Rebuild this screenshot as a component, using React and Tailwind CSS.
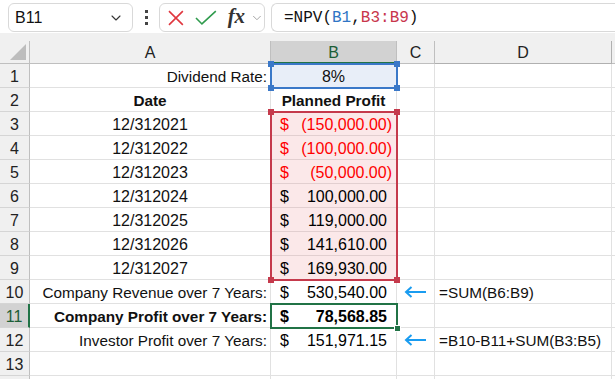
import React from "react";
import { ChevronDown } from "lucide-react";

const rows = [
  { n: 1, a: "Dividend Rate:", aCls: "justify-end pr-[3px] text-[15.3px]", b: { kind: "center", text: "8%" } },
  { n: 2, a: "Date", aCls: "justify-center font-bold text-[15.3px]", b: { kind: "center", text: "Planned Profit", bold: true } },
  { n: 3, a: "12/312021", aCls: "justify-center text-[16px]", b: { kind: "acct", val: "(150,000.00)", neg: true }, pink: true },
  { n: 4, a: "12/312022", aCls: "justify-center text-[16px]", b: { kind: "acct", val: "(100,000.00)", neg: true }, pink: true },
  { n: 5, a: "12/312023", aCls: "justify-center text-[16px]", b: { kind: "acct", val: "(50,000.00)", neg: true }, pink: true },
  { n: 6, a: "12/312024", aCls: "justify-center text-[16px]", b: { kind: "acct", val: "100,000.00" }, pink: true },
  { n: 7, a: "12/312025", aCls: "justify-center text-[16px]", b: { kind: "acct", val: "119,000.00" }, pink: true },
  { n: 8, a: "12/312026", aCls: "justify-center text-[16px]", b: { kind: "acct", val: "141,610.00" }, pink: true },
  { n: 9, a: "12/312027", aCls: "justify-center text-[16px]", b: { kind: "acct", val: "169,930.00" }, pink: true },
  { n: 10, a: "Company Revenue over 7 Years:", aCls: "justify-end pr-[3px] text-[15.3px]", b: { kind: "acct", val: "530,540.00" }, arrow: true, d: "=SUM(B6:B9)" },
  { n: 11, a: "Company Profit over 7 Years:", aCls: "justify-end pr-[3px] text-[15.3px] font-bold", b: { kind: "acct", val: "78,568.85", bold: true }, sel: true },
  { n: 12, a: "Investor Profit over 7 Years:", aCls: "justify-end pr-[3px] text-[15.3px]", b: { kind: "acct", val: "151,971.15" }, arrow: true, d: "=B10-B11+SUM(B3:B5)" },
  { n: 13 },
  { n: 14, hideNum: true },
];

function Arrow() {
  return (
    <svg width="24" height="12" viewBox="0 0 24 12">
      <path d="M2 6 H22" stroke="#1a9cf0" strokeWidth="2" />
      <path d="M7.5 1 L2 6 L7.5 11" stroke="#1a9cf0" strokeWidth="2" fill="none" />
    </svg>
  );
}

function BCell({ b }) {
  if (!b) return null;
  if (b.kind === "center") {
    return (
      <div className={`w-full flex justify-center ${b.bold ? "font-bold text-[15.3px]" : "text-[16px]"}`}>{b.text}</div>
    );
  }
  const color = b.neg ? "text-[#ff0000]" : "text-[#000]";
  return (
    <div className={`w-full flex justify-between pl-[9px] ${b.neg ? "pr-[4px]" : "pr-[9px]"} text-[16px] ${color} ${b.bold ? "font-bold" : ""}`}>
      <span>$</span>
      <span>{b.val}</span>
    </div>
  );
}

function Square({ cls, color }) {
  return <div className={`absolute w-[6px] h-[6px] ${color} ${cls}`} />;
}

export default function App() {
  const gl = "border-[#e1e1e1]";
  return (
    <div className="w-[615px] h-[379px] overflow-hidden bg-white text-[#111] font-['Liberation_Sans',Arial,sans-serif] leading-none">
      {/* Toolbar */}
      <div className="h-[33px] flex items-start pt-[3px] pl-[8px] gap-0 bg-white">
        <div className="w-[125px] h-[29px] rounded-[6px] border border-[#d9d9d9] flex items-center justify-between pl-[6px] pr-[8px] text-[16px]">
          <span>B11</span>
          <ChevronDown size={16} strokeWidth={1.6} className="text-[#333]" />
        </div>
        <div className="w-[26px] h-[29px] flex flex-col items-center justify-center gap-[3px]">
          <div className="w-[3px] h-[3px] bg-[#444]" />
          <div className="w-[3px] h-[3px] bg-[#444]" />
          <div className="w-[3px] h-[3px] bg-[#444]" />
        </div>
        <div className="w-[106px] h-[29px] rounded-[6px] border border-[#d9d9d9] flex items-center pl-[7px]">
          <svg width="18" height="18" viewBox="0 0 18 18">
            <path d="M2 2 L16 16 M16 2 L2 16" stroke="#e0373f" strokeWidth="1.6" fill="none" />
          </svg>
          <svg width="22" height="16" viewBox="0 0 22 16" className="ml-[10px]">
            <path d="M1 8 L7 14 L21 1" stroke="#2f9b4d" strokeWidth="1.6" fill="none" />
          </svg>
          <span className="ml-[11px] font-['Liberation_Serif',serif] italic font-bold text-[21px] text-[#333] leading-none -mt-[2px]">fx</span>
          <ChevronDown size={14} strokeWidth={1.5} className="ml-[5px] text-[#9a9a9a]" />
        </div>
        <div className="ml-[6px] flex-1 h-[29px] rounded-l-[6px] border border-r-0 border-[#d9d9d9] flex items-center pl-[12px] font-['Liberation_Mono',monospace] text-[16px]">
          <span>=NPV(</span>
          <span className="text-[#2f75c5]">B1</span>
          <span>,</span>
          <span className="text-[#c8364c]">B3:B9</span>
          <span>)</span>
        </div>
      </div>
      {/* gray band */}
      <div className="h-[8px] bg-[#f0f0f0]" />
      {/* column headers */}
      <div className="flex h-[23px] bg-[#f0f0f0] text-[16px] text-[#222]">
        <div className="w-[30px] shrink-0 border-r border-b border-[#bfbfbf] relative">
          <svg width="16" height="16" viewBox="0 0 16 16" className="absolute right-[3px] bottom-[3px]">
            <path d="M16 0 L16 16 L0 16 Z" fill="#bdbdbd" />
          </svg>
        </div>
        <div className="w-[241px] shrink-0 border-r border-b border-[#bfbfbf] flex items-center justify-center pt-[2px]">A</div>
        <div className="w-[126px] shrink-0 border-r border-[#bfbfbf] border-b-2 border-b-[#217346] bg-[#d2d2d2] text-[#1c5e36] flex items-center justify-center pt-[2px]">B</div>
        <div className="w-[38px] shrink-0 border-r border-b border-[#bfbfbf] flex items-center justify-center pt-[2px]">C</div>
        <div className="w-[177px] shrink-0 border-r border-b border-[#b0b0b0] flex items-center justify-center pt-[2px]">D</div>
        <div className="flex-1 border-b border-[#bfbfbf]" />
      </div>
      {/* body */}
      <div className="relative">
        {rows.map((r) => (
          <div key={r.n} className="flex h-[24px]">
            <div
              className={`w-[30px] shrink-0 border-b border-[#d5d5d5] flex items-center justify-center pt-[2px] text-[16px] ${
                r.sel ? "bg-[#d2d2d2] border-r-2 border-r-[#217346] text-[#1c5e36]" : "bg-[#f0f0f0] border-r border-r-[#bfbfbf] text-[#222]"
              }`}
            >
              {r.hideNum ? "" : r.n}
            </div>
            <div className={`w-[241px] shrink-0 border-r border-b ${gl} flex items-center pt-[2px] ${r.aCls || ""}`}>{r.a}</div>
            <div
              className={`w-[126px] shrink-0 border-r border-b flex items-center pt-[2px] ${
                r.pink ? "bg-[#fbe8e9] border-[#e2cfd0]" : r.n === 1 ? "bg-[#e8eef8] border-[#e1e1e1]" : gl
              }`}
            >
              <BCell b={r.b} />
            </div>
            <div className={`w-[38px] shrink-0 border-r border-b ${gl} flex items-center justify-center`}>
              {r.arrow ? <Arrow /> : null}
            </div>
            <div className={`w-[177px] shrink-0 border-r border-b ${gl} flex items-center pt-[2px] pl-[4px] text-[15.3px]`}>{r.d}</div>
            <div className={`flex-1 border-b ${gl}`} />
          </div>
        ))}

        {/* B1 blue reference box */}
        <div className="absolute left-[270px] top-[-1px] w-[128px] h-[26px] border-2 border-[#3a78c8]">
          <Square color="bg-[#3a78c8]" cls="left-[-4px] top-[-4px]" />
          <Square color="bg-[#3a78c8]" cls="right-[-4px] top-[-4px]" />
          <Square color="bg-[#3a78c8]" cls="left-[-4px] bottom-[-4px]" />
          <Square color="bg-[#3a78c8]" cls="right-[-4px] bottom-[-4px]" />
        </div>
        {/* B3:B9 red reference box */}
        <div className="absolute left-[270px] top-[47px] w-[128px] h-[170px] border-2 border-[#c53a4c]">
          <Square color="bg-[#c53a4c]" cls="left-[-4px] top-[-4px]" />
          <Square color="bg-[#c53a4c]" cls="right-[-4px] top-[-4px]" />
          <Square color="bg-[#c53a4c]" cls="left-[-4px] bottom-[-4px]" />
          <Square color="bg-[#c53a4c]" cls="right-[-4px] bottom-[-4px]" />
        </div>
        {/* B11 active cell */}
        <div className="absolute left-[270px] top-[239px] w-[128px] h-[26px] border-2 border-[#217346]">
          <div className="absolute right-[-5px] bottom-[-5px] w-[7px] h-[7px] bg-[#217346] border border-white" />
        </div>
      </div>
    </div>
  );
}
